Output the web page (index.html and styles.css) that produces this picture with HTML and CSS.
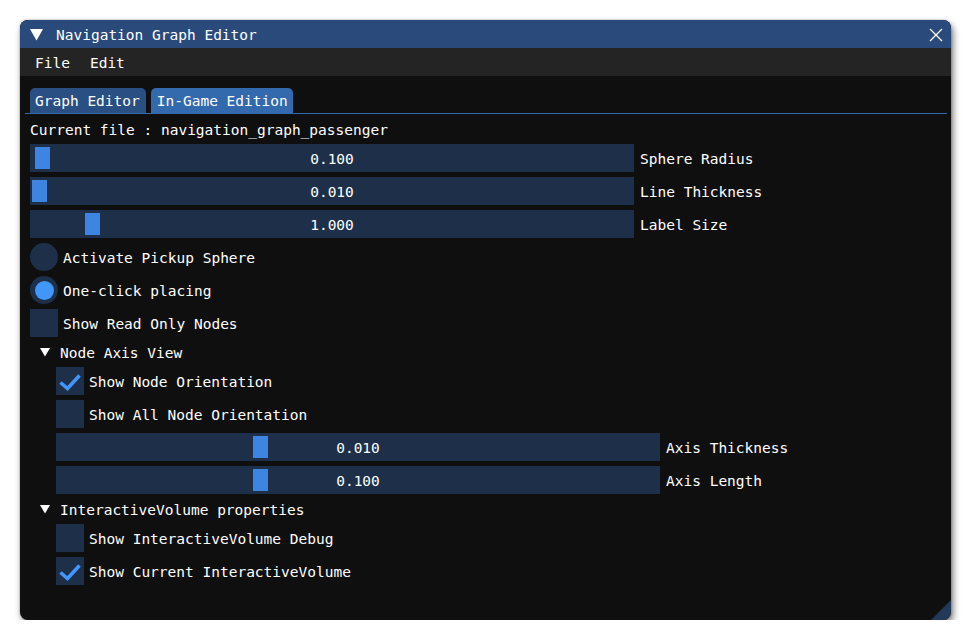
FILE: index.html
```html
<!DOCTYPE html>
<html>
<head>
<meta charset="utf-8">
<title>Navigation Graph Editor</title>
<link rel="stylesheet" href="styles.css">
</head>
<body>
<div class="window">
  <div class="titlebar">
    <svg class="collapse" width="13" height="12" viewBox="0 0 13 12"><polygon points="0,0 13,0 6.5,11.5" fill="#fff"/></svg>
    <span class="title lbl">Navigation Graph Editor</span>
    <svg class="close" width="14" height="14" viewBox="0 0 14 14"><path d="M1 1 L13 13 M13 1 L1 13" stroke="#fff" stroke-width="1.3" fill="none"/></svg>
  </div>
  <div class="menubar">
    <span class="lbl">File</span>
    <span class="lbl">Edit</span>
  </div>
  <div class="content">
    <div class="tabbar">
      <div class="tab">Graph Editor</div>
      <div class="tab active">In-Game Edition</div>
    </div>
    <div class="tab-sep"></div>
    <div class="rows">
      <div class="text-row">Current file : navigation_graph_passenger</div>
      <div class="slider-row">
        <div class="slider"><div class="grab" style="margin-left:5px"></div><span class="value lbl">0.100</span></div>
        <span class="lbl">Sphere Radius</span>
      </div>
      <div class="slider-row">
        <div class="slider"><div class="grab" style="margin-left:2px"></div><span class="value lbl">0.010</span></div>
        <span class="lbl">Line Thickness</span>
      </div>
      <div class="slider-row">
        <div class="slider"><div class="grab" style="margin-left:55px"></div><span class="value lbl">1.000</span></div>
        <span class="lbl">Label Size</span>
      </div>
      <div class="check-row">
        <div class="box radio"></div>
        <span class="lbl">Activate Pickup Sphere</span>
      </div>
      <div class="check-row">
        <div class="box radio"><div class="radio-dot"></div></div>
        <span class="lbl">One-click placing</span>
      </div>
      <div class="check-row">
        <div class="box"></div>
        <span class="lbl">Show Read Only Nodes</span>
      </div>
      <div class="tree-row">
        <svg class="tree-arrow" width="10" height="9" viewBox="0 0 10 9"><polygon points="0,0 10,0 5,8.5" fill="#fff"/></svg>
        <span class="lbl">Node Axis View</span>
      </div>
      <div class="indent">
        <div class="check-row">
          <div class="box"><svg width="28" height="28" viewBox="0 0 28 28"><polyline points="4.5,15.5 11.5,21.5 23.5,8.5" fill="none" stroke="#4296fa" stroke-width="3.6"/></svg></div>
          <span class="lbl">Show Node Orientation</span>
        </div>
        <div class="check-row">
          <div class="box"></div>
          <span class="lbl">Show All Node Orientation</span>
        </div>
        <div class="slider-row">
          <div class="slider"><div class="grab" style="margin-left:197px"></div><span class="value lbl">0.010</span></div>
          <span class="lbl">Axis Thickness</span>
        </div>
        <div class="slider-row">
          <div class="slider"><div class="grab" style="margin-left:197px"></div><span class="value lbl">0.100</span></div>
          <span class="lbl">Axis Length</span>
        </div>
      </div>
      <div class="tree-row">
        <svg class="tree-arrow" width="10" height="9" viewBox="0 0 10 9"><polygon points="0,0 10,0 5,8.5" fill="#fff"/></svg>
        <span class="lbl">InteractiveVolume properties</span>
      </div>
      <div class="indent">
        <div class="check-row">
          <div class="box"></div>
          <span class="lbl">Show InteractiveVolume Debug</span>
        </div>
        <div class="check-row">
          <div class="box"><svg width="28" height="28" viewBox="0 0 28 28"><polyline points="4.5,15.5 11.5,21.5 23.5,8.5" fill="none" stroke="#4296fa" stroke-width="3.6"/></svg></div>
          <span class="lbl">Show Current InteractiveVolume</span>
        </div>
      </div>
    </div>
  </div>
  <div class="resize-grip"></div>
</div>
</body>
</html>
```
FILE: styles.css
```css
html, body {
  margin: 0;
  background: #ffffff;
}
body {
  font-family: "DejaVu Sans Mono", "Liberation Mono", monospace;
  font-size: 14.5px;
  color: #ffffff;
}
.lbl {
  padding-top: 2px;
}
.window {
  position: relative;
  margin: 20px 0 0 20px;
  width: 931px;
  height: 600px;
  border-radius: 8px;
  background: #0f0f0f;
  box-shadow: 2px 4px 7px rgba(0, 0, 0, 0.55), 0 0 2px rgba(0, 0, 0, 0.35);
  overflow: hidden;
  display: flex;
  flex-direction: column;
}
.titlebar {
  height: 28px;
  flex: none;
  background: #294a7a;
  display: flex;
  align-items: center;
  padding: 0 8px 0 10px;
}
.collapse {
  margin-right: 13px;
  margin-top: 1px;
}
.title {
  flex: 1;
}
.close {
  margin-top: 1px;
}
.menubar {
  height: 28px;
  flex: none;
  background: #242424;
  display: flex;
  align-items: center;
  padding-left: 15px;
  gap: 20px;
}
.content {
  padding: 12px 10px 0 10px;
  display: flex;
  flex-direction: column;
}
.tabbar {
  display: flex;
  gap: 4px;
  height: 25px;
}
.tab {
  height: 25px;
  padding: 0 6px 0 5px;
  border-radius: 5px 5px 0 0;
  background: #2a4f82;
  display: flex;
  align-items: center;
}
.tab.active {
  background: #3369ad;
  padding: 0 5px 0 6px;
  margin-left: 1px;
}
.tab-sep {
  height: 1px;
  background: #3369ad;
  margin: 0 -6px 0 -5px;
}
.rows {
  display: flex;
  flex-direction: column;
  gap: 5px;
  margin-top: 6px;
}
.text-row {
  height: 19px;
  line-height: 19px;
  padding-top: 1px;
  margin-bottom: -1px;
}
.slider-row {
  display: flex;
  align-items: center;
  gap: 6px;
  height: 28px;
}
.slider {
  width: 604px;
  height: 28px;
  background: #1d2f49;
  display: grid;
  align-items: center;
}
.slider > * {
  grid-area: 1 / 1;
}
.grab {
  width: 15px;
  height: 22px;
  background: #3d85e0;
  justify-self: start;
}
.value {
  justify-self: center;
}
.check-row {
  display: flex;
  align-items: center;
  gap: 5px;
  height: 28px;
}
.box {
  width: 28px;
  height: 28px;
  flex: none;
  background: #1d2f49;
}
.box svg {
  display: block;
}
.radio {
  border-radius: 50%;
  display: flex;
  align-items: center;
  justify-content: center;
}
.radio-dot {
  width: 19px;
  height: 19px;
  border-radius: 50%;
  background: #4296fa;
}
.tree-row {
  height: 20px;
  display: flex;
  align-items: center;
  padding-left: 10px;
  gap: 10px;
}
.indent {
  padding-left: 26px;
  display: flex;
  flex-direction: column;
  gap: 5px;
}
.resize-grip {
  position: absolute;
  right: 0;
  bottom: 0;
  width: 20px;
  height: 20px;
  background: #22395a;
  clip-path: polygon(100% 0, 100% 100%, 0 100%);
}
```
